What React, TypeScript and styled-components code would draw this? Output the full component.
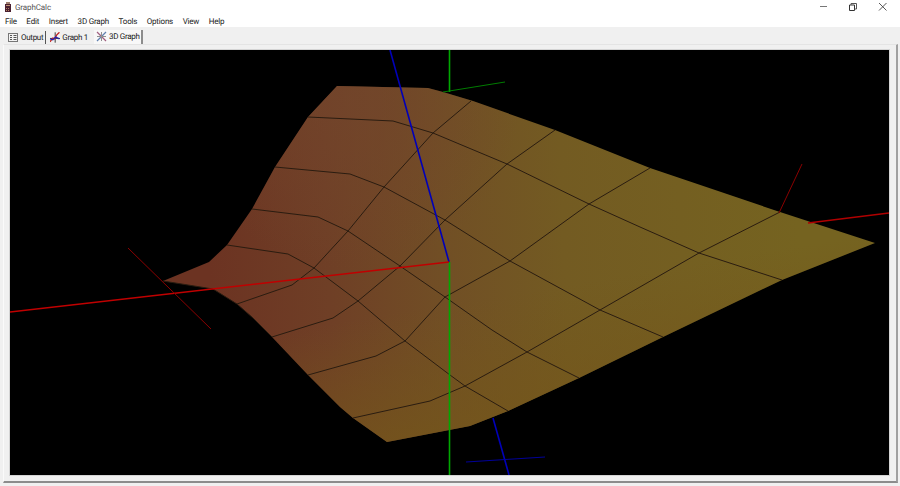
import React from 'react';
import styled, {createGlobalStyle} from "styled-components";

const GlobalStyle = createGlobalStyle`
  html, body {
    margin: 0;
    padding: 0;
    background: #ffffff;
    overflow: hidden;
  }
`

const menuItems = ['File', 'Edit', 'Insert', '3D Graph', 'Tools', 'Options', 'View', 'Help']

const outline = "163,281 209,262 227,245 252,209 275,167 308,117 337,86 428,88 443,92 473,101 555,130 650,168 780,212 875,243 782,280 663,337 579,378 508,411 470,426 387,442 353,418 340,407 308,375 272,337 253,318 237,304 213,289"

const gridLines = [
    "163,281 213,289 237,304 253,318 272,337",
    "227,245 288,254 314,268 358,301 405,341 450,375 465,386 508,411",
    "252,209 318,217 348,231 400,266 445,297 492,330 527,352 579,378",
    "275,167 350,174 384,187 445,220 510,261 600,310 663,337",
    "308,117 393,121 433,133 507,164 589,204 640,227 699,253 782,280",
    "237,304 292,285 314,268 348,231 384,187 433,133 471,101",
    "272,337 333,318 358,301 400,266 445,220 507,164 555,130",
    "308,375 376,356 405,341 445,297 510,261 589,204 650,168",
    "353,418 430,401 465,386 527,352 600,310 699,253 780,212",
]

type AxisLine = { x1: number, y1: number, x2: number, y2: number, color: string, width: number }

const axes: AxisLine[] = [
    {x1: 449.5, y1: 50, x2: 449.5, y2: 92, color: '#00a800', width: 1.6},
    {x1: 449.5, y1: 262, x2: 449.5, y2: 475, color: '#00a800', width: 1.6},
    {x1: 443, y1: 92, x2: 505, y2: 82, color: '#007c00', width: 1},
    {x1: 390, y1: 50, x2: 449, y2: 262, color: '#0000b8', width: 1.6},
    {x1: 493, y1: 418, x2: 509, y2: 475, color: '#0000b8', width: 1.6},
    {x1: 466, y1: 462, x2: 545, y2: 457, color: '#00009a', width: 1},
    {x1: 10, y1: 312, x2: 449, y2: 262, color: '#c00000', width: 1.6},
    {x1: 808, y1: 223, x2: 889, y2: 213, color: '#b00000', width: 1.6},
    {x1: 128, y1: 248, x2: 211, y2: 329, color: '#8a0000', width: 1},
    {x1: 779, y1: 213, x2: 802, y2: 164, color: '#8a0000', width: 1},
]

const OutputIcon = () => (
    <svg width="11" height="11" viewBox="0 0 11 11">
        <rect x="0.5" y="1.5" width="9" height="8" fill="#f4f4f4" stroke="#777"/>
        <path d="M2 3.5h2M2 5.5h2M2 7.5h2M5.5 3.5h3M5.5 5.5h3M5.5 7.5h3" stroke="#555"/>
    </svg>
)

const GraphIcon = () => (
    <svg width="11" height="11" viewBox="0 0 11 11">
        <path d="M5.5 0v11M0 6.5h11" stroke="#333"/>
        <path d="M0 10L3 6l2 1 2-4 3-3" stroke="#c02020" strokeWidth="1.4" fill="none"/>
        <path d="M0 7l3 1 3-3 4 2" stroke="#2020b0" strokeWidth="1.4" fill="none"/>
    </svg>
)

const Graph3DIcon = () => (
    <svg width="11" height="11" viewBox="0 0 11 11">
        <path d="M1 1l9 9" stroke="#a06080" strokeWidth="1.2"/>
        <path d="M10 1L1 10" stroke="#6080b0" strokeWidth="1.2"/>
        <path d="M5.5 1v9M1 5.5h9" stroke="#909090"/>
    </svg>
)

const AppIcon = () => (
    <svg width="7" height="10" viewBox="0 0 7 10">
        <rect x="1" y="0" width="4" height="2" fill="#a08070"/>
        <rect x="0" y="2" width="6" height="8" fill="#4a2030"/>
        <rect x="1" y="3" width="4" height="1" fill="#c09070"/>
        <rect x="1" y="6" width="1" height="1" fill="#b08060"/>
        <rect x="3" y="6" width="1" height="1" fill="#b08060"/>
        <rect x="1" y="8" width="1" height="1" fill="#b08060"/>
        <rect x="3" y="8" width="1" height="1" fill="#b08060"/>
    </svg>
)

const WindowButtons = () => (
    <Controls>
        <svg width="10" height="10" viewBox="0 0 10 10">
            <path d="M2 4.5h7" stroke="#777" strokeWidth="1"/>
        </svg>
        <svg width="10" height="10" viewBox="0 0 10 10">
            <path d="M1.5 3h5v5.5h-5z" fill="none" stroke="#333"/>
            <path d="M3 3V1.5h5.5V7H6.5" fill="none" stroke="#555"/>
        </svg>
        <svg width="10" height="10" viewBox="0 0 10 10">
            <path d="M1 1l7.5 7.5M8.5 1L1 8.5" stroke="#444" strokeWidth="0.9"/>
        </svg>
    </Controls>
)

const Plot = () => (
    <svg width="879" height="425" viewBox="10 50 879 425" style={{display: 'block'}}>
        <defs>
            <linearGradient id="surface" gradientUnits="userSpaceOnUse" x1="210" y1="260" x2="800" y2="240">
                <stop offset="0" stopColor="#6c3322"/>
                <stop offset="0.2" stopColor="#6f3f26"/>
                <stop offset="0.4" stopColor="#714f25"/>
                <stop offset="0.6" stopColor="#735b22"/>
                <stop offset="1" stopColor="#756320"/>
            </linearGradient>
            <linearGradient id="surfaceBottom" gradientUnits="userSpaceOnUse" x1="350" y1="320" x2="370" y2="440">
                <stop offset="0" stopColor="#74561a" stopOpacity="0"/>
                <stop offset="1" stopColor="#74561a" stopOpacity="0.7"/>
            </linearGradient>
            <radialGradient id="surfaceTop" gradientUnits="userSpaceOnUse" cx="350" cy="100" r="170">
                <stop offset="0" stopColor="#73452c" stopOpacity="0.7"/>
                <stop offset="1" stopColor="#73452c" stopOpacity="0"/>
            </radialGradient>
        </defs>
        <polygon points={outline} fill="url(#surface)"/>
        <polygon points={outline} fill="url(#surfaceTop)"/>
        <polygon points={outline} fill="url(#surfaceBottom)"/>
        {gridLines.map((points) => (
            <polyline key={points} points={points} fill="none" stroke="#2a1c10" strokeWidth="1"/>
        ))}
        {axes.map((a) => (
            <line key={`${a.x1}-${a.y1}`} x1={a.x1} y1={a.y1} x2={a.x2} y2={a.y2} stroke={a.color} strokeWidth={a.width}/>
        ))}
    </svg>
)

const App = () => {
    return (
        <Window>
            <GlobalStyle/>
            <TitleBar>
                <AppIcon/>
                <Title>GraphCalc</Title>
                <WindowButtons/>
            </TitleBar>
            <MenuBar>
                {menuItems.map((item) => <MenuItem key={item}>{item}</MenuItem>)}
            </MenuBar>
            <Workspace>
                <TabStrip>
                    <Tab $width={37}><OutputIcon/>Output</Tab>
                    <TabDivider/>
                    <Tab $width={38}><GraphIcon/>Graph 1</Tab>
                    <Tab $width={49} $active><Graph3DIcon/>3D Graph</Tab>
                </TabStrip>
                <Panel>
                    <Canvas>
                        <Plot/>
                    </Canvas>
                </Panel>
            </Workspace>
        </Window>
    );
};

const Window = styled.div`
  width: 900px;
  height: 486px;
  display: flex;
  flex-direction: column;
  background: #ffffff;
  font-family: Roboto, "Liberation Sans", sans-serif;
  font-size: 8px;
  letter-spacing: -0.2px;
  text-rendering: geometricPrecision;
  color: #1a1a1a;
  overflow: hidden;
`

const TitleBar = styled.div`
  height: 14px;
  display: flex;
  align-items: center;
  padding-left: 5px;
`

const Title = styled.span`
  margin-left: 3px;
  letter-spacing: -0.1px;
  color: #555555;
`

const Controls = styled.div`
  margin-left: auto;
  width: 70px;
  margin-right: 12px;
  display: flex;
  justify-content: space-between;
`

const MenuBar = styled.div`
  height: 13px;
  box-sizing: border-box;
  padding: 2px 0 0 5px;
  display: flex;
  align-items: center;
  gap: 9.6px;
`

const MenuItem = styled.span`
  line-height: 11px;
`

const Workspace = styled.div`
  flex: 1;
  display: flex;
  flex-direction: column;
  background: #f0f0f0;
`

const TabStrip = styled.div`
  height: 17px;
  display: flex;
  align-items: flex-end;
  padding-left: 8px;
  letter-spacing: -0.3px;
`

const Tab = styled.div<{ $active?: boolean, $width: number }>`
  width: ${props => props.$width}px;
  box-sizing: border-box;
  height: ${props => props.$active ? 14 : 13}px;
  display: flex;
  align-items: center;
  gap: 2px;
  white-space: nowrap;
  padding: ${props => props.$active ? '0 0 2px 2px' : '0'};
  margin-left: ${props => props.$active ? 6 : 0}px;
  background: ${props => props.$active ? '#f8f8f8' : 'transparent'};
  border-right: ${props => props.$active ? '2px solid #8c8c8c' : '0'};
`

const TabDivider = styled.div`
  width: 1px;
  height: 13px;
  margin: 0 4px 0 0;
  background: #555555;
`

const Panel = styled.div`
  flex: 1;
  margin: 0 2px 3px 3px;
  padding: 5px 6px 5px 6px;
  border-top: 1px solid #e4e4e4;
  border-left: 1px solid #fafafa;
  border-right: 2px solid #a0a0a0;
  border-bottom: 2px solid #8c8c8c;
  box-sizing: border-box;
`

const Canvas = styled.div`
  width: 879px;
  height: 425px;
  background: #000000;
  outline: 1px solid #d4d4d4;
`

export default App;
